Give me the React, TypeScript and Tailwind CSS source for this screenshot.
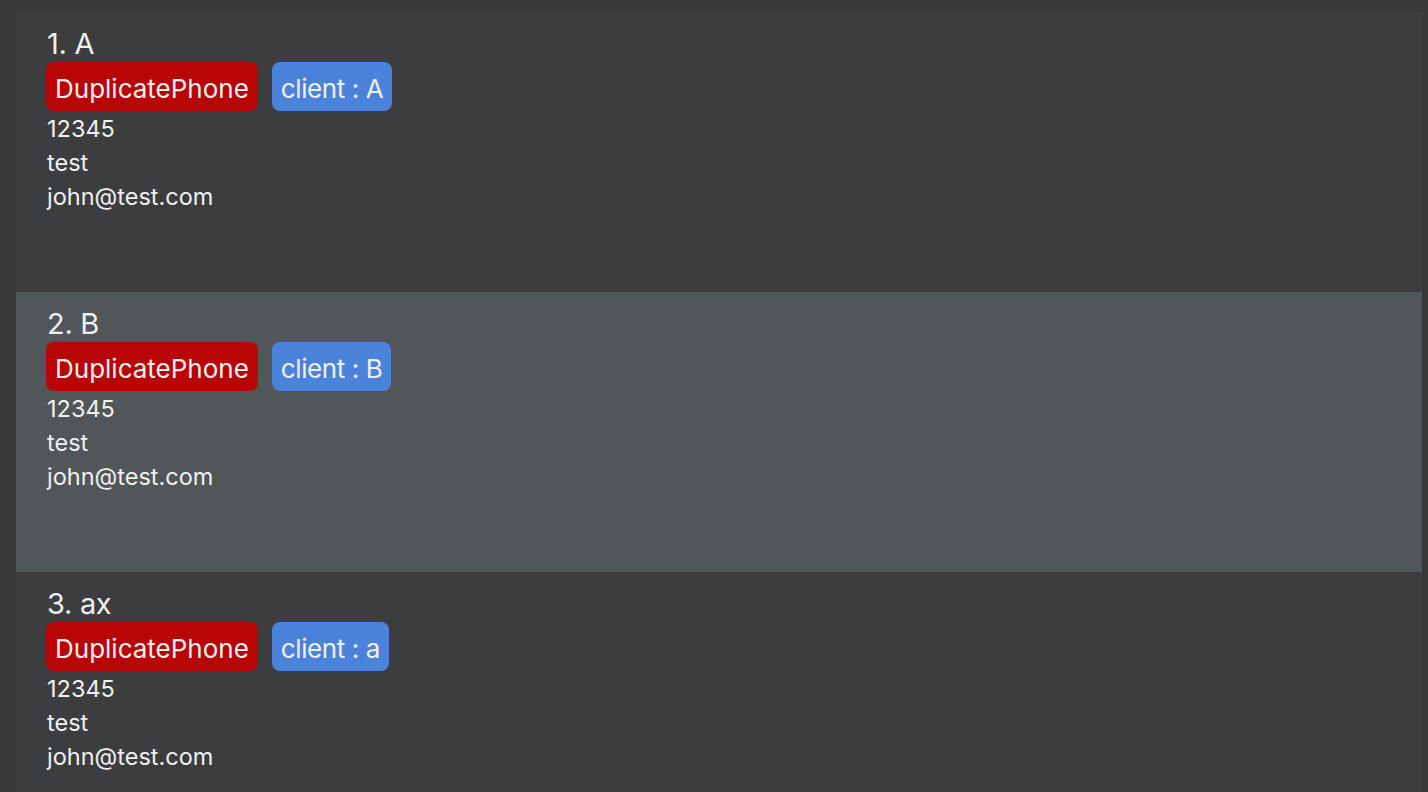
import React from "react";

const people = [
  { idx: 1, name: "A", client: "A", selected: false },
  { idx: 2, name: "B", client: "B", selected: true },
  { idx: 3, name: "ax", client: "a", selected: false },
];

export default function App() {
  return (
    <div className="w-[1428px] h-[792px] overflow-hidden bg-[#393939] pl-[16px] pr-[6px] pt-[12px] font-['Inter',sans-serif] text-[#f0f0f0]">
      {people.map((p) => (
        <div
          key={p.idx}
          className={`h-[280px] pl-[30px] pt-[18px] ${p.selected ? "bg-[#515658]" : "bg-[#3c3d3f]"}`}
        >
          <div className="text-[29px] leading-[28px] h-[32px] pl-[1px] tracking-[-0.3px]">
            {p.idx}. {p.name}
          </div>
          <div className="flex gap-[14px]">
            <span className="h-[49px] flex items-center px-[9px] pt-[3px] rounded-[8px] bg-[#b80606] text-[26px]">
              DuplicatePhone
            </span>
            <span className="h-[49px] flex items-center px-[9px] pt-[3px] rounded-[8px] bg-[#4a83d9] text-[26px] tracking-[-0.4px]">
              client : {p.client}
            </span>
          </div>
          <div className="text-[23.5px] leading-[34px] pl-[1px] mt-[1px]">
            <div>12345</div>
            <div>test</div>
            <div>john@test.com</div>
          </div>
        </div>
      ))}
    </div>
  );
}
